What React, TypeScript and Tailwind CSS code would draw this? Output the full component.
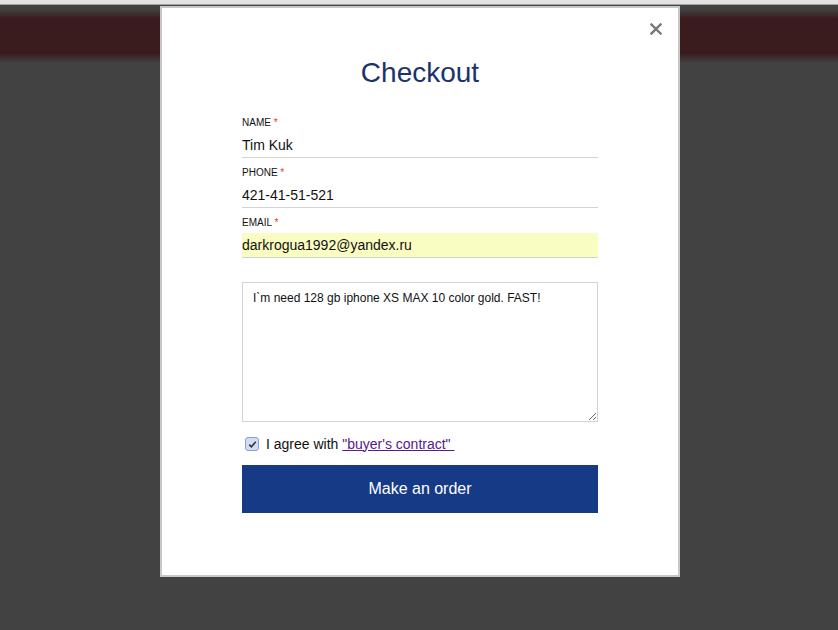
import React from 'react';

const fieldCls =
  "w-full h-[25px] border-b border-[#d3d3d3] text-[14px] text-[#111] outline-none px-0 font-['Liberation_Sans',Arial,sans-serif]";

const Field: React.FC<{ label: string; value: string; autofill?: boolean }> = ({ label, value, autofill }) => (
  <div className="mb-[9px]">
    <label className="block h-[12px] text-[10px] leading-[12px] text-[#111] uppercase">
      {label} <span className="text-[#e0392b]">*</span>
    </label>
    <input
      readOnly
      value={value}
      className={autofill ? `${fieldCls} mt-[4px] bg-[#fafdc1]` : `${fieldCls} mt-[4px] bg-white`}
    />
  </div>
);

export default function App() {
  return (
    <div className="relative w-[838px] h-[630px] overflow-hidden bg-[#424242] font-['Liberation_Sans',Arial,sans-serif]">
      <div className="h-[5px] bg-[#e3e3e3] border-b border-[#a5a5a5]" />
      <div className="mt-[4px] h-[54px] bg-[linear-gradient(to_bottom,#424242_0%,#3a1c1e_18%,#3a1c1e_82%,#424242_100%)]" />

      <div className="absolute left-[160px] top-[6px] w-[520px] h-[571px] bg-white border-2 border-[#c8c8c8]">
        <button className="absolute right-[15px] top-[14px] w-[14px] h-[14px] flex items-center justify-center">
          <svg width="12" height="12" viewBox="0 0 12 12">
            <path d="M1.5 1.5 L10.5 10.5 M10.5 1.5 L1.5 10.5" stroke="#777" strokeWidth="2.4" strokeLinecap="square" />
          </svg>
        </button>

        <div className="px-[80px] pt-[49px]">
          <h1 className="text-center text-[28px] leading-[32px] text-[#1b326b] mb-[28px]">Checkout</h1>

          <Field label="Name" value="Tim Kuk" />
          <Field label="Phone" value="421-41-51-521" />
          <Field label="Email" value="darkrogua1992@yandex.ru" autofill />

          <textarea
            readOnly
            defaultValue="I`m need 128 gb iphone XS MAX 10 color gold. FAST!"
            className="mt-[24px] block w-full h-[140px] border border-[#d4d4d4] px-[10px] py-[8px] text-[12px] leading-[14px] text-[#111] outline-none font-['Liberation_Sans',Arial,sans-serif]"
          />

          <div className="mt-[13px] h-[18px] flex items-center text-[14px] text-[#111]">
            <span className="ml-[3px] mr-[7px] w-[14px] h-[14px] rounded-[3px] border border-[#86a2da] bg-[#d2dcf2] flex items-center justify-center">
              <svg width="9" height="9" viewBox="0 0 9 9">
                <path d="M1.2 4.6 L3.4 6.8 L7.8 1.8" fill="none" stroke="#333" strokeWidth="1.6" />
              </svg>
            </span>
            <span>I agree with&nbsp;</span>
            <a href="#" className="text-[#551a8b] underline">"buyer's contract"&nbsp;</a>
          </div>

          <button className="mt-[12px] w-full h-[48px] bg-[#163a85] text-white text-[16px] font-['Liberation_Sans',Arial,sans-serif]">
            Make an order
          </button>
        </div>
      </div>
    </div>
  );
}
